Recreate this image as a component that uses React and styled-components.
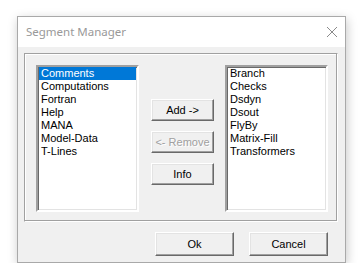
import React from "react";
import styled, { createGlobalStyle } from "styled-components";

const GlobalStyle = createGlobalStyle`
  html, body {
    margin: 0;
    padding: 0;
    background: #ffffff;
  }
`;

const leftItems = [
  "Comments",
  "Computations",
  "Fortran",
  "Help",
  "MANA",
  "Model-Data",
  "T-Lines",
];

const rightItems = [
  "Branch",
  "Checks",
  "Dsdyn",
  "Dsout",
  "FlyBy",
  "Matrix-Fill",
  "Transformers",
];

const App = () => {
  return (
    <>
      <GlobalStyle />
      <StyledPage>
        <StyledWindow>
          <StyledTitleBar>
            <span>Segment Manager</span>
            <svg width="12" height="12" viewBox="0 0 12 12">
              <path d="M1 1 L11 11 M11 1 L1 11" stroke="#8a8a8a" strokeWidth="1" />
            </svg>
          </StyledTitleBar>
          <StyledBody>
            <StyledGroup>
              <StyledList>
                {leftItems.map((item, i) => (
                  <StyledItem key={item} selected={i === 0}>
                    {item}
                  </StyledItem>
                ))}
              </StyledList>
              <StyledMiddle>
                <StyledButton>Add -&gt;</StyledButton>
                <StyledButton disabled>&lt;- Remove</StyledButton>
                <StyledButton>Info</StyledButton>
              </StyledMiddle>
              <StyledList>
                {rightItems.map((item) => (
                  <StyledItem key={item}>{item}</StyledItem>
                ))}
              </StyledList>
            </StyledGroup>
            <StyledFooter>
              <StyledButton wide>Ok</StyledButton>
              <StyledButton wide>Cancel</StyledButton>
            </StyledFooter>
          </StyledBody>
        </StyledWindow>
      </StyledPage>
    </>
  );
};

const StyledPage = styled.div`
  padding: 16px 0 0 17px;
`;

const StyledWindow = styled.div`
  box-sizing: border-box;
  width: 329px;
  height: 247px;
  border: 1px solid #a9a9a9;
  background: #f0f0f0;
  display: flex;
  flex-direction: column;
  box-shadow: 1px 3px 10px rgba(0, 0, 0, 0.22);
`;

const StyledTitleBar = styled.div`
  height: 30px;
  flex: none;
  background: #ffffff;
  display: flex;
  align-items: center;
  justify-content: space-between;
  padding: 0 7px 0 8px;
  font-family: "Noto Sans", "Open Sans", sans-serif;
  font-size: 11.5px;
  color: #999999;
  span {
    margin-top: -1px;
  }
  svg {
    margin-top: -1px;
  }
`;

const StyledBody = styled.div`
  flex: 1;
  display: flex;
  flex-direction: column;
  padding: 6px 7px 6px 6px;
  font-family: "Liberation Sans", Arial, sans-serif;
  font-size: 11px;
`;

const StyledGroup = styled.div`
  box-sizing: border-box;
  height: 169px;
  display: flex;
  align-items: flex-start;
  padding: 11px 9px 0 11px;
  border: 1px solid #a0a0a0;
  border-right-color: #ffffff;
  border-bottom-color: #ffffff;
  box-shadow: inset -1px -1px 0 #a0a0a0, inset 1px 1px 0 #ffffff;
`;

const StyledList = styled.div`
  box-sizing: border-box;
  width: 104px;
  height: 147px;
  background: #ffffff;
  border: 2px solid;
  border-color: #a0a0a0 #ffffff #ffffff #a0a0a0;
  box-shadow: inset 1px 1px 0 #696969, inset -1px -1px 0 #e3e3e3;
  padding: 0 1px;
`;

const StyledItem = styled.div`
  height: 13px;
  line-height: 13px;
  padding-left: 2px;
  white-space: nowrap;
  color: ${(p) => (p.selected ? "#ffffff" : "#000000")};
  background: ${(p) => (p.selected ? "#0078d7" : "transparent")};
`;

const StyledMiddle = styled.div`
  display: flex;
  flex-direction: column;
  gap: 10px;
  margin: 34px 11px 0 12px;
`;

const StyledButton = styled.button`
  box-sizing: border-box;
  width: ${(p) => (p.wide ? "79px" : "63px")};
  height: ${(p) => (p.wide ? "24px" : "22px")};
  padding: 0;
  background: #f0f0f0;
  font-family: "Liberation Sans", Arial, sans-serif;
  font-size: 11px;
  color: ${(p) => (p.disabled ? "#a0a0a0" : "#000000")};
  text-shadow: ${(p) => (p.disabled ? "1px 1px 0 #ffffff" : "none")};
  border: 1px solid;
  border-color: #ffffff #696969 #696969 #ffffff;
  box-shadow: inset -1px -1px 0 #a0a0a0, inset 1px 1px 0 #e3e3e3;
`;

const StyledFooter = styled.div`
  display: flex;
  justify-content: flex-end;
  gap: 15px;
  margin-top: 10px;
  padding-right: 10px;
`;

export default App;
